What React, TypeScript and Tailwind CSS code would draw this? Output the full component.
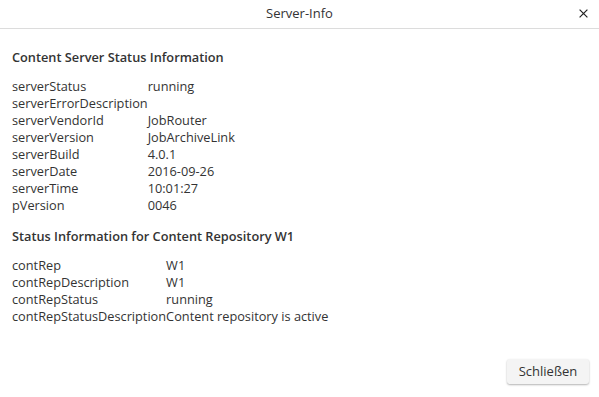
import React from "react";

const server: [string, string][] = [
  ["serverStatus", "running"],
  ["serverErrorDescription", ""],
  ["serverVendorId", "JobRouter"],
  ["serverVersion", "JobArchiveLink"],
  ["serverBuild", "4.0.1"],
  ["serverDate", "2016-09-26"],
  ["serverTime", "10:01:27"],
  ["pVersion", "0046"],
];

const repo: [string, string][] = [
  ["contRep", "W1"],
  ["contRepDescription", "W1"],
  ["contRepStatus", "running"],
  ["contRepStatusDescription", "Content repository is active"],
];

function Table({ rows }: { rows: [string, string][] }) {
  return (
    <table className="border-collapse">
      <tbody>
        {rows.map(([k, v]) => (
          <tr key={k} className="h-[17px]">
            <td className="p-0 leading-[17px] whitespace-nowrap">{k}</td>
            <td className="p-0 leading-[17px] whitespace-nowrap">{v}</td>
          </tr>
        ))}
      </tbody>
    </table>
  );
}

export default function App() {
  return (
    <div
      className="w-[599px] h-[397px] bg-white text-[#333] flex flex-col"
      style={{ fontFamily: '"Open Sans", sans-serif' }}
    >
      <div className="relative h-[29px] border-b border-[#dcdcdc] flex items-center justify-center text-[13px]">
        <span>Server-Info</span>
        <button className="absolute right-[11px] top-[9px] flex">
          <svg width="9" height="9" viewBox="0 0 9 9">
            <path d="M0.6 0.6L8.4 8.4M8.4 0.6L0.6 8.4" stroke="#222" strokeWidth="1.2" />
          </svg>
        </button>
      </div>
      <div className="flex-1 px-[12px] text-[12.75px]">
        <div className="mt-[19px] mb-[12px] font-semibold leading-[18px]">
          Content Server Status Information
        </div>
        <Table rows={server} />
        <div className="mt-[13px] mb-[12px] font-semibold leading-[18px]">
          Status Information for Content Repository W1
        </div>
        <Table rows={repo} />
      </div>
      <div className="flex justify-end px-[10px] pb-[13px]">
        <button className="h-[25px] w-[82px] rounded-[3px] bg-[#f4f4f4] text-[13px] text-[#333] shadow-[0_1px_2px_rgba(0,0,0,0.3)]">
          Schließen
        </button>
      </div>
    </div>
  );
}
